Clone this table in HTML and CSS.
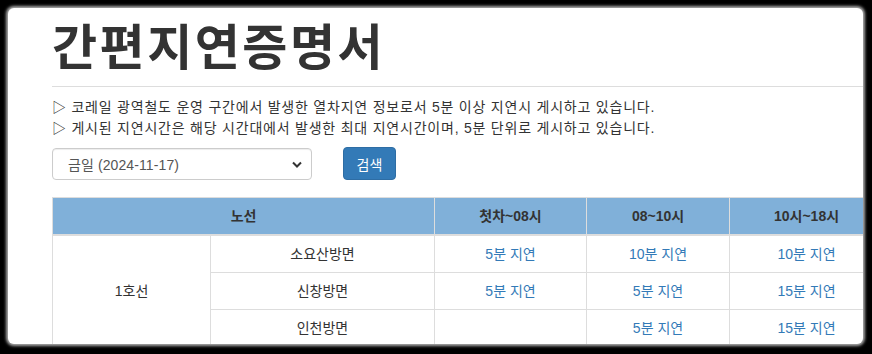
FILE: index.html
```html
<!DOCTYPE html>
<html lang="ko">
<head>
<meta charset="utf-8">
<link rel="stylesheet" href="styles.css">
</head>
<body>
<div class="frame">
  <div class="card">
    <h1 class="title">간편지연증명서</h1>
    <hr class="rule">
    <div class="notes">
      <p>▷ 코레일 광역철도 운영 구간에서 발생한 열차지연 정보로서 5분 이상 지연시 게시하고 있습니다.</p>
      <p>▷ 게시된 지연시간은 해당 시간대에서 발생한 최대 지연시간이며, 5분 단위로 게시하고 있습니다.</p>
    </div>
    <div class="search">
      <div class="select">
        <span>금일 (2024-11-17)</span>
        <svg class="chev" width="10" height="7" viewBox="0 0 10 7"><path d="M1 1.5 L5 5.5 L9 1.5" fill="none" stroke="#333" stroke-width="2"/></svg>
      </div>
      <button class="btn">검색</button>
    </div>
    <table class="delay">
      <colgroup>
        <col class="c1"><col class="c2"><col class="c3"><col class="c4"><col class="c5">
      </colgroup>
      <thead>
        <tr><th colspan="2">노선</th><th>첫차~08시</th><th>08~10시</th><th>10시~18시</th></tr>
      </thead>
      <tbody>
        <tr><td rowspan="3">1호선</td><td class="dir">소요산방면</td><td><a>5분 지연</a></td><td><a>10분 지연</a></td><td><a>10분 지연</a></td></tr>
        <tr><td class="dir">신창방면</td><td><a>5분 지연</a></td><td><a>5분 지연</a></td><td><a>15분 지연</a></td></tr>
        <tr><td class="dir">인천방면</td><td></td><td><a>5분 지연</a></td><td><a>15분 지연</a></td></tr>
      </tbody>
    </table>
  </div>
</div>
</body>
</html>
```
FILE: styles.css
```css
html, body {
  margin: 0;
  padding: 0;
  background: #000;
  width: 872px;
  height: 354px;
  overflow: hidden;
}
.frame {
  padding: 8px 9px 8px 8px;
}
.card {
  width: 855px;
  height: 336px;
  background: #fff;
  border-radius: 6px;
  overflow: hidden;
  box-shadow: 0 0 3px 2px rgba(230,230,230,0.75);
  padding-left: 44px;
  box-sizing: border-box;
  font-family: "Liberation Sans", "Noto Sans CJK KR", sans-serif;
  font-size: 14px;
  color: #333;
}
.title {
  margin: 0;
  padding-top: 8px;
  font-family: "Noto Sans CJK KR", sans-serif;
  font-weight: 700;
  font-size: 49px;
  line-height: 56px;
  color: #333;
  letter-spacing: 2.5px;
}
.rule {
  margin: 14px 0 0 0;
  border: 0;
  border-top: 1px solid #ddd;
}
.notes {
  margin-top: 10px;
}
.notes p {
  margin: 0;
  line-height: 21px;
  letter-spacing: 0.78px;
}
.search {
  display: flex;
  align-items: flex-start;
  gap: 31px;
  margin-top: 9px;
}
.select {
  width: 260px;
  height: 32px;
  box-sizing: border-box;
  border: 1px solid #ccc;
  border-radius: 4px;
  display: flex;
  align-items: center;
  justify-content: space-between;
  padding: 0 9px 0 15px;
  color: #555;
  letter-spacing: 0.1px;
  box-shadow: inset 0 1px 1px rgba(0,0,0,.075);
}
.btn {
  width: 53px;
  height: 33px;
  margin-top: -1px;
  background: #337ab7;
  border: 1px solid #2e6da4;
  border-radius: 4px;
  color: #fff;
  font-family: "Liberation Sans", "Noto Sans CJK KR", sans-serif;
  font-size: 14px;
  padding: 0;
}
.delay {
  margin-top: 17px;
  border-collapse: collapse;
  table-layout: fixed;
  width: 831px;
}
.c1 { width: 158px; }
.c2 { width: 224px; }
.c3 { width: 152px; }
.c4 { width: 143px; }
.c5 { width: 154px; }
.delay th, .delay td {
  border: 1px solid #ddd;
  padding: 8px;
  line-height: 20px;
  text-align: center;
  vertical-align: middle;
}
.delay th {
  background: #80b0d9;
  font-weight: 700;
  border-bottom-width: 2px;
}
.delay a {
  color: #337ab7;
}
```
